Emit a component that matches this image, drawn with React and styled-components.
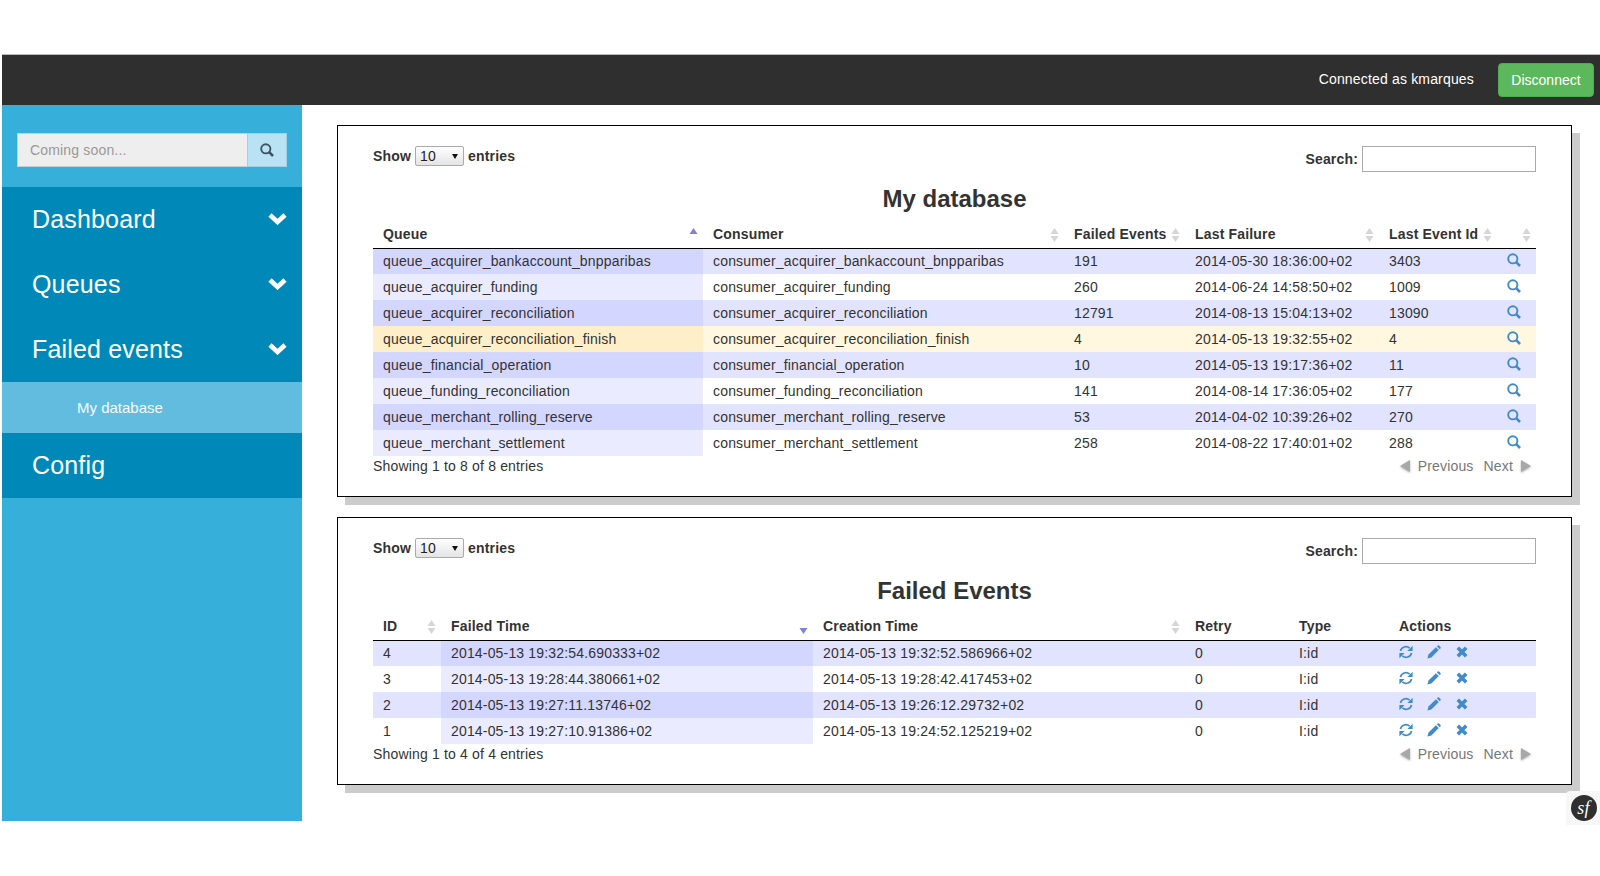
import React from 'react';
import styled, { createGlobalStyle } from 'styled-components';

const GlobalStyle = createGlobalStyle`
  html, body { margin: 0; padding: 0; background: #fff; }
  body {
    font-family: "Liberation Sans", Arial, sans-serif;
    font-size: 14px;
    letter-spacing: 0.17px;
    color: #333;
    overflow: hidden;
  }
  * { box-sizing: border-box; }
`;

const Page = styled.div`
  position: relative;
  height: 876px;
  padding: 54px 0 0 2px;
`;
const TopBar = styled.div`
  height: 51px;
  background: #2f2f2f;
  border-top: 1px solid #bbb;
  display: flex;
  align-items: center;
  justify-content: flex-end;
  padding-right: 6px;
`;
const Connected = styled.span`
  color: #fff;
  margin-right: 24px;
  margin-bottom: 3px;
`;
const Disconnect = styled.button`
  width: 96px;
  height: 34px;
  background: #5cb85c;
  border: 1px solid #4cae4c;
  border-radius: 4px;
  color: #fff;
  font: 14px "Liberation Sans", Arial, sans-serif;
  padding: 0;
`;
const Body = styled.div`
  display: flex;
`;
const Sidebar = styled.nav`
  width: 300px;
  height: 716px;
  flex: none;
  background: #36b0da;
`;
const SearchWrap = styled.div`
  display: flex;
  height: 82px;
  padding: 28px 15px 0;
`;
const SearchInput = styled.div`
  width: 231px;
  height: 34px;
  background: #eee;
  border: 1px solid #ccc;
  color: #999;
  padding: 0 12px;
  line-height: 32px;
`;
const SearchBtn = styled.div`
  width: 40px;
  height: 34px;
  margin-left: -1px;
  background: #b9e3f4;
  border: 1px solid #a9cfdf;
  color: #3b5561;
  display: flex;
  align-items: center;
  justify-content: center;
`;
const NavItem = styled.div`
  height: 65px;
  background: #0089b8;
  color: #fff;
  font-size: 25px;
  display: flex;
  align-items: center;
  justify-content: space-between;
  padding: 0 15px 1px 30px;
`;
const ChevronMark = styled.svg`
  margin-bottom: 2px;
`;
const SubItem = styled.div`
  height: 51px;
  background: #62bcdf;
  color: #f2fafd;
  font-size: 15px;
  letter-spacing: 0;
  padding-left: 75px;
  line-height: 52px;
`;
const Main = styled.main`
  flex: 1;
  padding: 20px 0 0 35px;
  display: flex;
  flex-direction: column;
  gap: 20px;
`;
const Panel = styled.section`
  width: 1235px;
  height: ${p => p.$h}px;
  background: #fff;
  border: 1px solid #000;
  box-shadow: 8px 8px 0 #ccc;
  padding: 20px 35px 0;
`;
const Controls = styled.div`
  display: flex;
  justify-content: space-between;
  align-items: flex-start;
  height: 35px;
  font-weight: bold;
`;
const Length = styled.div`
  display: flex;
  align-items: center;
  gap: 4px;
  height: 20px;
`;
const FakeSelect = styled.div`
  width: 49px;
  height: 20px;
  border: 1px solid #aaa;
  border-radius: 2px;
  background: linear-gradient(#fff, #e4e4e4);
  font-weight: normal;
  padding-left: 4px;
  line-height: 18px;
  position: relative;
  color: #222;
  &::after {
    content: '';
    position: absolute;
    right: 5px;
    top: 7px;
    border: 3.5px solid transparent;
    border-top: 5px solid #111;
    border-bottom: 0;
  }
`;
const SearchBox = styled.div`
  display: flex;
  align-items: center;
  gap: 4px;
`;
const Field = styled.div`
  width: 174px;
  height: 26px;
  border: 1px solid #aaa;
  background: #fff;
`;
const Title = styled.h2`
  margin: 0;
  height: 40px;
  padding-top: 3px;
  text-align: center;
  font-size: 24px;
  line-height: 30px;
  font-weight: bold;
  letter-spacing: 0;
  color: #333;
`;
const Table = styled.table`
  width: 1163px;
  table-layout: fixed;
  border-collapse: collapse;
  border-spacing: 0;
`;
const Th = styled.th`
  height: 27px;
  padding: 0 10px;
  text-align: left;
  font-weight: bold;
  position: relative;
  border-bottom: 1px solid #000;
  white-space: nowrap;
`;
const SortMark = styled.svg`
  position: absolute;
  right: ${p => p.$right ?? 5}px;
  top: ${p => p.$top ?? 6}px;
`;
const Tr = styled.tr`
  background: ${p => (p.$hl ? '#fff7df' : p.$odd ? '#e2e4ff' : '#fff')};
`;
const Td = styled.td`
  height: 26px;
  padding: 0 10px;
  white-space: nowrap;
  background: ${p => (p.$sorted ? (p.$hl ? '#ffefc9' : p.$odd ? '#d3d6ff' : '#eaebff') : 'transparent')};
`;
const RowIcons = styled.span`
  display: inline-flex;
  align-items: center;
  color: #428bca;
  font-size: 14px;
  gap: 14px;
  margin-left: ${p => p.$left || 0}px;
  vertical-align: -1px;
`;
const Footer = styled.div`
  display: flex;
  justify-content: space-between;
  height: 20px;
  line-height: 20px;
`;
const Pager = styled.div`
  display: flex;
  align-items: center;
  gap: 5px;
  color: #777;
  padding-right: 4px;
`;
const PagerLabel = styled.span`
  margin-left: ${p => p.$gap || 0}px;
`;
const Arrow = styled.svg`
  margin-left: ${p => p.$gap || 0}px;
  filter: drop-shadow(0 1px 1px rgba(0, 0, 0, 0.3));
`;
const Profiler = styled.div`
  position: absolute;
  right: 0;
  bottom: 51px;
  width: 34px;
  height: 34px;
  background: #f7f7f7;
  border-top-left-radius: 4px;
  display: flex;
  align-items: center;
  justify-content: flex-end;
  padding-right: 3px;
`;

const SortBoth = ({ right }) => (
  <SortMark width="9" height="16" $right={right}>
    <path d="M4.5 1 L8.5 7 L0.5 7 Z" fill="#d6d6d6" />
    <path d="M4.5 15 L8.5 9 L0.5 9 Z" fill="#d6d6d6" />
  </SortMark>
);
const SortAsc = () => (
  <SortMark width="9" height="16">
    <path d="M4.5 1 L8.5 7 L0.5 7 Z" fill="#7d82dc" />
  </SortMark>
);
const SortDesc = () => (
  <SortMark width="9" height="16" $top={14}>
    <path d="M4.5 7 L8.5 1 L0.5 1 Z" fill="#7d82dc" />
  </SortMark>
);

const Chevron = () => (
  <ChevronMark width="19" height="13" viewBox="0 0 19 13">
    <path d="M2 3 L9.5 10 L17 3" fill="none" stroke="#fff" strokeWidth="4.6" />
  </ChevronMark>
);
const SearchIcon = () => (
  <svg width="14" height="14" viewBox="0 0 14 14" fill="none" stroke="currentColor">
    <circle cx="5.8" cy="5.8" r="4.6" strokeWidth="1.9" />
    <path d="M9.2 9.2 L13 13" strokeWidth="2.6" />
  </svg>
);
const RefreshIcon = () => (
  <svg width="14" height="14" viewBox="0 0 14 14">
    <path d="M1.4 6 A5.6 5.6 0 0 1 10.6 3.2" fill="none" stroke="currentColor" strokeWidth="1.7" />
    <path d="M13.6 0.8 V6 H8.4 Z" fill="currentColor" />
    <path d="M12.6 8 A5.6 5.6 0 0 1 3.4 10.8" fill="none" stroke="currentColor" strokeWidth="1.7" />
    <path d="M0.4 13.2 V8 H5.6 Z" fill="currentColor" />
  </svg>
);
const PencilIcon = () => (
  <svg width="14" height="14" viewBox="0 0 14 14" fill="currentColor">
    <path d="M0.4 13.6 L1.5 9.6 L8.9 2.2 L11.8 5.1 L4.4 12.5 Z" />
    <path d="M9.8 1.3 L10.8 0.4 Q11.4 0 12 0.5 L13.5 2 Q14 2.6 13.6 3.2 L12.7 4.2 Z" />
  </svg>
);
const CrossIcon = () => (
  <svg width="13" height="12" viewBox="-1 0 13 12">
    <path d="M1.8 1.8 L10.2 10.2 M10.2 1.8 L1.8 10.2" stroke="currentColor" strokeWidth="3.6" />
  </svg>
);

const Pagination = () => (
  <Pager>
    <Arrow width="12" height="14">
      <path d="M11 1 L11 13 L1 7 Z" fill="#a8a8a8" />
    </Arrow>
    <PagerLabel $gap={2}>Previous</PagerLabel>
    <PagerLabel $gap={5}>Next</PagerLabel>
    <Arrow width="12" height="14" $gap={2}>
      <path d="M1 1 L1 13 L11 7 Z" fill="#a8a8a8" />
    </Arrow>
  </Pager>
);

const TopControls = () => (
  <Controls>
    <Length>
      Show <FakeSelect>10</FakeSelect> entries
    </Length>
    <SearchBox>
      Search: <Field />
    </SearchBox>
  </Controls>
);

const queues = [
  ['bankaccount_bnpparibas', 191, '2014-05-30 18:36:00+02', 3403],
  ['funding', 260, '2014-06-24 14:58:50+02', 1009],
  ['reconciliation', 12791, '2014-08-13 15:04:13+02', 13090],
  ['reconciliation_finish', 4, '2014-05-13 19:32:55+02', 4],
].map(r => ['queue_acquirer_' + r[0], 'consumer_acquirer_' + r[0], r[1], r[2], r[3]]);
const moreQueues = [
  ['financial_operation', 10, '2014-05-13 19:17:36+02', 11],
  ['funding_reconciliation', 141, '2014-08-14 17:36:05+02', 177],
  ['merchant_rolling_reserve', 53, '2014-04-02 10:39:26+02', 270],
  ['merchant_settlement', 258, '2014-08-22 17:40:01+02', 288],
].map(r => ['queue_' + r[0], 'consumer_' + r[0], r[1], r[2], r[3]]);
const rows = [...queues, ...moreQueues];

const events = [
  [4, '2014-05-13 19:32:54.690333+02', '2014-05-13 19:32:52.586966+02'],
  [3, '2014-05-13 19:28:44.380661+02', '2014-05-13 19:28:42.417453+02'],
  [2, '2014-05-13 19:27:11.13746+02', '2014-05-13 19:26:12.29732+02'],
  [1, '2014-05-13 19:27:10.91386+02', '2014-05-13 19:24:52.125219+02'],
];

export default function App() {
  return (
    <Page>
      <GlobalStyle />
      <TopBar>
        <Connected>Connected as kmarques</Connected>
        <Disconnect>Disconnect</Disconnect>
      </TopBar>
      <Body>
        <Sidebar>
          <SearchWrap>
            <SearchInput>Coming soon...</SearchInput>
            <SearchBtn><SearchIcon /></SearchBtn>
          </SearchWrap>
          <NavItem>Dashboard <Chevron /></NavItem>
          <NavItem>Queues <Chevron /></NavItem>
          <NavItem>Failed events <Chevron /></NavItem>
          <SubItem>My database</SubItem>
          <NavItem>Config</NavItem>
        </Sidebar>
        <Main>
          <Panel $h={372}>
            <TopControls />
            <Title>My database</Title>
            <Table>
              <colgroup>
                <col width="330" />
                <col width="361" />
                <col width="121" />
                <col width="194" />
                <col width="113" />
                <col width="44" />
              </colgroup>
              <thead>
                <tr>
                  <Th>Queue<SortAsc /></Th>
                  <Th>Consumer<SortBoth /></Th>
                  <Th>Failed Events<SortBoth /></Th>
                  <Th>Last Failure<SortBoth /></Th>
                  <Th>Last Event Id<SortBoth right={0} /></Th>
                  <Th><SortBoth /></Th>
                </tr>
              </thead>
              <tbody>
                {rows.map((r, i) => {
                  const odd = i % 2 === 0;
                  const hl = i === 3;
                  return (
                    <Tr key={r[0]} $odd={odd} $hl={hl}>
                      <Td $sorted $odd={odd} $hl={hl}>{r[0]}</Td>
                      <Td>{r[1]}</Td>
                      <Td>{r[2]}</Td>
                      <Td>{r[3]}</Td>
                      <Td>{r[4]}</Td>
                      <Td><RowIcons $left={5}><SearchIcon /></RowIcons></Td>
                    </Tr>
                  );
                })}
              </tbody>
            </Table>
            <Footer>
              <span>Showing 1 to 8 of 8 entries</span>
              <Pagination />
            </Footer>
          </Panel>
          <Panel $h={268}>
            <TopControls />
            <Title>Failed Events</Title>
            <Table>
              <colgroup>
                <col width="68" />
                <col width="372" />
                <col width="372" />
                <col width="104" />
                <col width="100" />
                <col width="147" />
              </colgroup>
              <thead>
                <tr>
                  <Th>ID<SortBoth /></Th>
                  <Th>Failed Time<SortDesc /></Th>
                  <Th>Creation Time<SortBoth /></Th>
                  <Th>Retry</Th>
                  <Th>Type</Th>
                  <Th>Actions</Th>
                </tr>
              </thead>
              <tbody>
                {events.map((e, i) => {
                  const odd = i % 2 === 0;
                  return (
                    <Tr key={e[0]} $odd={odd}>
                      <Td>{e[0]}</Td>
                      <Td $sorted $odd={odd}>{e[1]}</Td>
                      <Td>{e[2]}</Td>
                      <Td>0</Td>
                      <Td>I:id</Td>
                      <Td><RowIcons><RefreshIcon /><PencilIcon /><CrossIcon /></RowIcons></Td>
                    </Tr>
                  );
                })}
              </tbody>
            </Table>
            <Footer>
              <span>Showing 1 to 4 of 4 entries</span>
              <Pagination />
            </Footer>
          </Panel>
        </Main>
      </Body>
      <Profiler>
        <svg width="26" height="26" viewBox="0 0 26 26">
          <circle cx="13" cy="13" r="13" fill="#2f2f2f" />
          <text x="12.5" y="18.5" textAnchor="middle" fill="#fff" fontFamily="Liberation Serif" fontStyle="italic" fontSize="18">sf</text>
        </svg>
      </Profiler>
    </Page>
  );
}
